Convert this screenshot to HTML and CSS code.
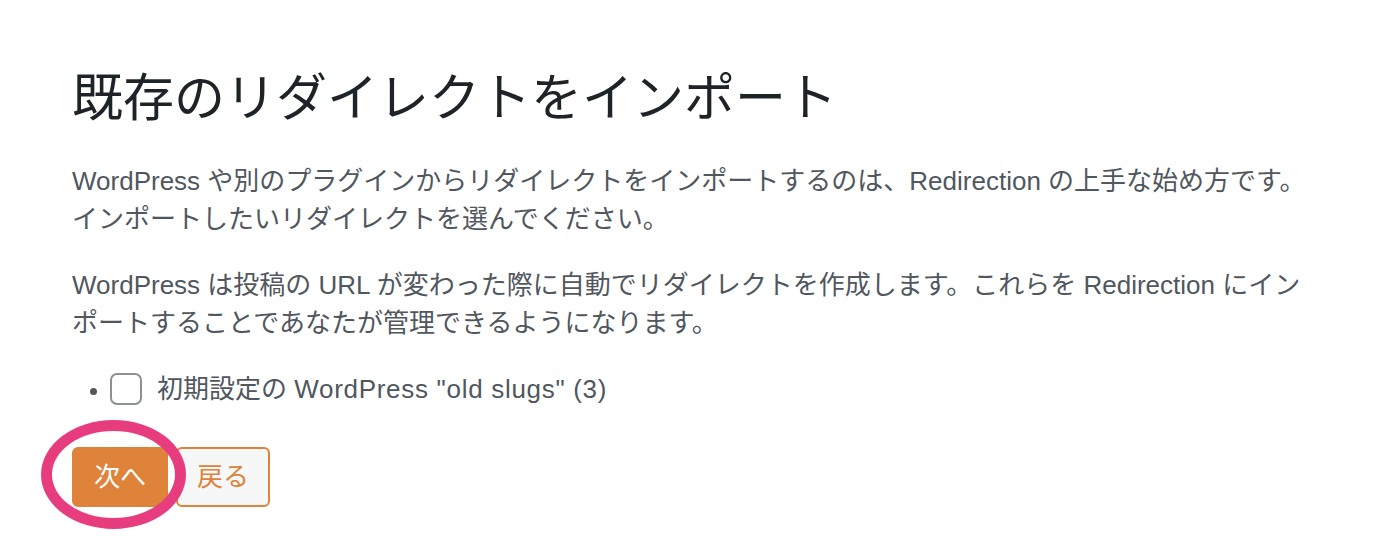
FILE: index.html
```html
<!DOCTYPE html>
<html lang="ja">
<head>
<meta charset="utf-8">
<link rel="stylesheet" href="styles.css">
</head>
<body>
<div class="page">
  <h1 class="title">既存のリダイレクトをインポート</h1>
  <p class="text">WordPress や別のプラグインからリダイレクトをインポートするのは、Redirection の上手な始め方です。<br>インポートしたいリダイレクトを選んでください。</p>
  <p class="text">WordPress は投稿の URL が変わった際に自動でリダイレクトを作成します。これらを Redirection にイン<br>ポートすることであなたが管理できるようになります。</p>
  <ul class="options">
    <li class="option"><span class="check"></span><span class="label">初期設定の <span class="latin">WordPress "old slugs" (3)</span></span></li>
  </ul>
  <div class="actions">
    <span class="primary-wrap">
      <button class="btn btn-primary">次へ</button>
      <span class="highlight"></span>
    </span>
    <button class="btn btn-secondary">戻る</button>
  </div>
</div>
</body>
</html>
```
FILE: styles.css
```css
html, body {
  margin: 0;
  padding: 0;
  background: #ffffff;
}
body {
  font-family: "Liberation Sans", "Noto Sans CJK JP", sans-serif;
  color: #50575e;
  min-height: 550px;
}
.page {
  padding: 63px 72px 40px 72px;
}
.title {
  margin: 0;
  font-family: "Liberation Sans", "Noto Sans CJK JP", sans-serif;
  font-weight: 400;
  font-size: 51px;
  line-height: 72px;
  color: #1d2327;
}
.text {
  margin: 27px 0 0 0;
  font-size: 26px;
  line-height: 38px;
  white-space: nowrap;
}
.text + .text {
  margin-top: 28px;
}
.options {
  margin: 28px 0 0 0;
  padding: 0 0 0 38px;
  font-size: 26px;
  line-height: 38px;
}
.option {
  list-style: disc;
}
.option::marker {
  font-size: 22px;
}
.latin {
  letter-spacing: 0.7px;
}
.check {
  display: inline-block;
  width: 32px;
  height: 32px;
  box-sizing: border-box;
  border: 2px solid #8c8f94;
  border-radius: 7px;
  background: #fff;
  vertical-align: -7px;
  margin-right: 15px;
}
.actions {
  display: flex;
  gap: 8px;
  margin-top: 39px;
}
.primary-wrap {
  position: relative;
  display: inline-flex;
}
.btn {
  font-family: "Liberation Sans", "Noto Sans CJK JP", sans-serif;
  font-size: 26px;
  height: 60px;
  box-sizing: border-box;
  border-radius: 6px;
  padding: 0;
  line-height: 56px;
  white-space: nowrap;
  text-align: center;
}
.btn-primary {
  width: 96px;
  background: #df823a;
  border: 2px solid #df823a;
  color: #ffffff;
}
.btn-secondary {
  width: 94px;
  background: #f6f7f7;
  border: 2px solid #df823a;
  color: #df823a;
}
.highlight {
  position: absolute;
  left: -31px;
  top: -27px;
  width: 145px;
  height: 109px;
  box-sizing: border-box;
  border: 11px solid #e73c7e;
  border-radius: 50%;
  pointer-events: none;
}
```
